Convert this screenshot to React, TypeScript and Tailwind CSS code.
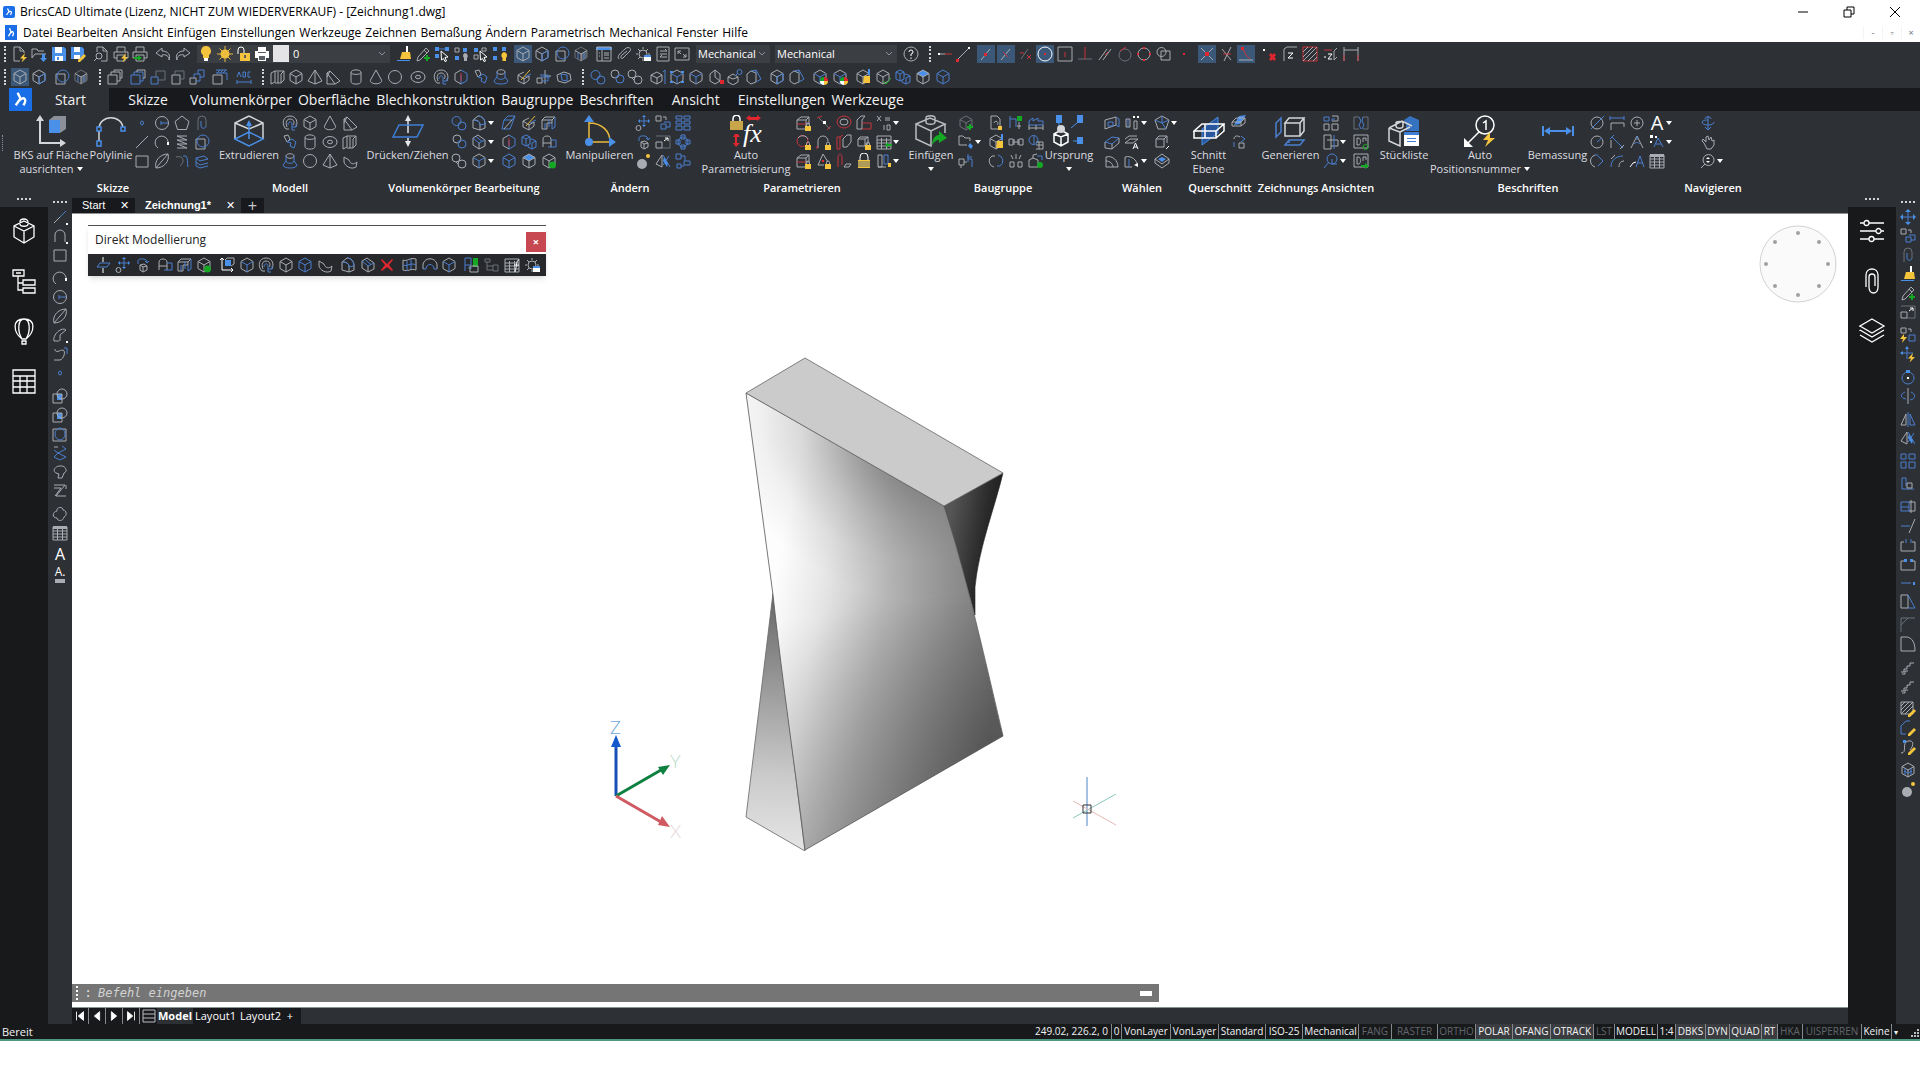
import { ReactNode } from 'react';

// [ink, path] pairs on a 16x16 grid. Lower case inks stroke, upper case inks fill.
type Mark = [string, string];

const INKS: Record<string, string> = {
  g: 'fill-none stroke-[#a9adb3]',
  d: 'fill-none stroke-[#6b7078]',
  b: 'fill-none stroke-[#4a7fd0]',
  r: 'fill-none stroke-[#c8323c]',
  y: 'fill-none stroke-[#e8b93c]',
  w: 'fill-none stroke-white',
  n: 'fill-none stroke-[#1fae2c]',
  G: 'fill-[#a9adb3] stroke-none',
  D: 'fill-[#5c6066] stroke-none',
  B: 'fill-[#4a90e8] stroke-none',
  R: 'fill-[#e0262e] stroke-none',
  Y: 'fill-[#f4c43c] stroke-none',
  W: 'fill-white stroke-none',
  N: 'fill-[#15a824] stroke-none',
};

const HEX = 'M8 1 14 4.5V11.5L8 15 2 11.5V4.5Z';
const HEX_IN = 'M2 4.5 8 8 14 4.5M8 8V15';
const BOLT: Mark = ['Y', 'M13 7 8 12.5H11L9.5 16.5 15 11H12Z'];
const PLUS: Mark = ['N', 'M11 9H13V11H15V13H13V15H11V13H9V11H11Z'];
const PENCIL: Mark = ['Y', 'M14 8 16 10 10 16H8V14Z'];
const LOCK: Mark[] = [
  ['Y', 'M9 11H15V16H9Z'],
  ['g', 'M10.5 11V9.5a1.500 1.500 0 0 1 3 0V11'],
];
const PRINT: Mark = ['g', 'M4 6V1H12V6M4 12H1V6H15V12H12M4 9H12V15H4Z'];
const GRID: Mark = ['g', 'M1 2H15V15H1ZM1 6H15M1 9H15M1 12H15M5.5 4V15M10.5 4V15'];
const CURSOR: Mark = ['w', 'M7 5 14 11 11 11.5 12.5 15 11 15.5 9.5 12.5 7.5 14Z'];

const ICONS: Record<string, Mark[]> = {
  new: [['g', 'M8 15H2V1H8L12 5V7M8 1V5H12'], BOLT],
  open: [['g', 'M1 12V3H6L7 5H13M1 12 4 8H15'], ['B', 'M11 8H14V12H16L12.5 16 9 12H11Z']],
  save: [['B', 'M1 1H13L15 3V15H1Z'], ['W', 'M4 1H11V7H4ZM4 10H12V15H4Z'], ['B', 'M6 11H8V14H6Z']],
  saveAs: [['B', 'M1 1H12L14 3V13H1Z'], ['W', 'M4 1H10V6H4ZM4 9H10V13H4Z'], PENCIL],
  preview: [['g', 'M4 6V1H10L14 5V15H8M10 1V5H14M9 10a3 3 0 1 1-6 0a3 3 0 1 1 6 0M4 12 1 15']],
  printFast: [PRINT, BOLT],
  printSend: [PRINT, ['N', 'M2 11H6V9L10 12 6 15V13H2Z']],
  undo: [['g', 'M7 2 1 7 7 11V9C11 8 14 10 14 14C16 9 13 5 7 5Z']],
  redo: [['g', 'M9 2 15 7 9 11V9C5 8 2 10 2 14C0 9 3 5 9 5Z']],
  bulb: [['Y', 'M8 0A5 5 0 0 0 5 9V12H11V9A5 5 0 0 0 8 0Z'], ['W', 'M6 12H10V15H6Z']],
  sun: [['Y', 'M12.5 8a4.5 4.5 0 1 1-9 0a4.5 4.5 0 1 1 9 0'], ['y', 'M8 0V16M0 8H16M2.5 2.5 13.5 13.5M13.5 2.5 2.5 13.5']],
  unlock: [['w', 'M3 8V4A3 3 0 0 1 9 4V7'], ['Y', 'M5 7H15V15H5Z'], ['D', 'M9 9H11V12H9Z']],
  printer: [['W', 'M4 1H12V5H15V12H12V15H4V12H1V5H4Z'], ['D', 'M4 6H12V7H4ZM5 10H11V14H5Z']],
  brush: [['W', 'M10 0H12V7H10Z'], ['Y', 'M6 6H14L15 13H4Z'], ['B', 'M1 14H14V15H1Z']],
  dropper: [['g', 'M11 2 14 5 5 14 2 15 3 11ZM9 4 12 7'], PLUS],
  pickBox: [['B', 'M1 1H5V5H1ZM11 1H15V5H11ZM1 8H5V12H1Z'], ['b', 'M5 3H11'], CURSOR],
  pickLayer: [['B', 'M9 2H13V6H9ZM1 10H5V14H1Z'], ['g', 'M1 2H5V6H1Z'], ['G', 'M11 7a3 3 0 0 1 2 5V15H10V12a3 3 0 0 1 1-5']],
  pickOff: [['B', 'M1 2H5V6H1Z'], ['g', 'M9 2H13V5H9ZM1 9H5V13H1Z'], CURSOR],
  pickOn: [['B', 'M1 1H5V5H1ZM10 1H14V5H10ZM1 10H5V14H1Z'], ['Y', 'M12 6a3.500 3.500 0 0 1 2 6V15H10.500V12a3.500 3.500 0 0 1 1.500-6']],
  cube: [['g', HEX], ['g', HEX_IN]],
  cubeBlue: [['b', HEX], ['b', HEX_IN]],
  cubeMix: [['g', HEX], ['b', HEX_IN]],
  cubeSide: [['g', HEX], ['g', HEX_IN], ['b', 'M8 15V8L14 4.5V11.5Z']],
  cubeFace: [['B', 'M8 1 14 4.500 8 8 2 4.500Z'], ['g', HEX], ['g', HEX_IN]],
  cubeShade: [['D', 'M8 8 14 4.5V11.5L8 15Z'], ['d', HEX], ['g', HEX_IN], ['b', 'M5 6.500V13M11 6.500V13']],
  cubeUp: [['b', 'M8 1 14 4.500V11.500L8 15M8 6V15'], ['g', 'M8 15 2 11.500V4.500L8 1'], ['r', 'M8 4V12']],
  cubeOk: [['g', HEX], ['g', HEX_IN], ['N', 'M15 12a3.500 3.500 0 1 1-7 0a3.500 3.500 0 1 1 7 0']],
  cubeCheck: [['g', HEX], ['g', HEX_IN], ['n', 'M8 12 11 15 16 9']],
  cubePlus: [['d', HEX], ['d', HEX_IN], PLUS],
  cubeArrow: [['g', 'M7 3 12 6V12L7 15 1 12V6ZM1 6 7 9 12 6M7 9V15'], ['b', 'M15 15V1M13 3 15 1']],
  cubeNodes: [['g', HEX], ['b', HEX_IN], ['B', 'M1 2H4V4H1ZM12 2H15V4H12ZM1 12H4V14H1ZM12 12H15V14H12Z']],
  cubeX: [['g', 'M7 1 12 5V12L7 15 2 12V5ZM7 1V8L12 12'], ['R', 'M12 11H16V15H12Z']],
  cubeBall: [['g', 'M6 5 11 8V13L6 16 1 13V8ZM1 8 6 10 11 8'], ['b', 'M15 3a2.500 2.500 0 1 1-5 0a2.500 2.500 0 1 1 5 0M10 5 8 7']],
  cubeTilt: [['g', 'M5 2 10 4V13L5 15 1 12V5Z'], ['b', 'M5 2 10 1 15 10 10 13M10 1V4']],
  cubeColor: [['g', HEX], ['b', HEX_IN], ['R', 'M12 8A4 4 0 0 1 16 12H12Z'], ['Y', 'M12 16A4 4 0 0 0 16 12H12Z'], ['W', 'M12 16A4 4 0 0 1 8 12H12Z'], ['N', 'M8 12A4 4 0 0 1 12 8V12Z']],
  cubeGold: [['g', HEX], ['g', HEX_IN], ['Y', 'M9 7H15V14H8Z'], ['B', 'M13 0H15V6H13Z']],
  circleBox: [['g', 'M2 5H11V15H2Z'], ['b', 'M15 7a6 6 0 1 1-12 0a6 6 0 1 1 12 0']],
  circleBoxGray: [['g', 'M5 5H14V14H5ZM10 6a4.500 4.500 0 1 1-9 0a4.500 4.500 0 1 1 9 0']],
  circleBoxFill: [['B', 'M5 6H10V12H5Z'], ['g', 'M1 6H10V15H1Z'], ['g', 'M15 6a5 5 0 1 1-10 0a5 5 0 1 1 10 0']],
  panel: [['B', 'M0 1H16V4H0Z'], ['g', 'M1 1H15V15H1ZM6 4V15M8 7H13M8 9H13M8 12H13M3 7H4M3 10H4']],
  attach: [['g', 'M3 13C0 10 6 6 9 3C12 0 16 2 14 5L7 12C5 14 4 10 6 9L11 5']],
  gear: [['g', 'M12 8a4 4 0 1 1-8 0a4 4 0 1 1 8 0M8 1V3M8 13V15M1 8H3M13 8H15M3 3 5 5M13 3 11 5M3 13 5 11'], ['W', 'M9 9H16V15H9Z'], ['B', 'M9 9H16V11H9Z']],
  list: [['g', 'M2 1H14V15H2ZM5 5H12M5 8H12M5 11H12M10 3 12 5M7 9 5 11']],
  resize: [['g', 'M1 2H15V14H1ZM4 8V5H7M4 5 7 8M12 8V11H9M12 11 9 8']],
  help: [['g', 'M15 8a7 7 0 1 1-14 0a7 7 0 1 1 14 0'], ['w', 'M6 6a2 2 0 1 1 2 2V10M8 11.500V13']],
  copyBack: [['g', 'M1 6H10V15H1Z'], ['g', 'M4 6V3H13V12H10M7 3V1H15V9H13']],
  copyBlue: [['b', 'M1 6H10V15H1ZM4 6V3H13V12H10'], ['g', 'M7 3V1H15V9H13']],
  copyFar: [['b', 'M1 8H8V15H1Z'], ['d', 'M6 8V2H15V11H8']],
  copyNear: [['g', 'M3 6H11V15H3Z'], ['d', 'M6 6V2H15V10H11']],
  copyTwo: [['g', 'M1 9H7V15H1Z'], ['b', 'M5 9V5H11V12H7M9 5V1H15V8H11']],
  hatchBox: [['g', 'M1 6H10V15H1Z'], ['b', 'M4 4H15V11M4 1H15M5 4 8 1M8 4 11 1M11 4 14 1']],
  spell: [['b', 'M1 13H15M1 11V15M15 11V15M1 8 3 3 5 8M7 3V8H9.500V3ZM14.500 3H12V8H14.500']],
  block: [['g', 'M1 4 5 2V13L1 15ZM5 2H14L11 5V14H5M8 3V14M14 2V11L11 14']],
  pyramid: [['g', 'M8 1 15 12 8 15 1 12ZM8 1V15']],
  wedge: [['g', 'M2 4 5 2 15 12 10 15H2ZM5 2 2 8M10 15 2 4']],
  cylinder: [['g', 'M3 3.500C3 0 13 0 13 3.500V12.500C13 16 3 16 3 12.500ZM3 3.500C3 6 13 6 13 3.500']],
  cone: [['g', 'M8 1 13.500 11C15 16 1 16 2.500 11Z']],
  sphere: [['g', 'M14.500 8a6.500 6.500 0 1 1-13 0a6.500 6.500 0 1 1 13 0']],
  torus: [['g', 'M15 8a7 5.500 0 1 1-14 0a7 5.500 0 1 1 14 0M10.500 8a2.500 1.800 0 1 1-5 0a2.500 1.800 0 1 1 5 0']],
  spiral: [['g', 'M4 14C-1 9 1 1 8 1C15 1 16 8 14 12M5 12C3 7 5 4 8 4C12 4 13 8 11 10M4 14H7'], ['b', 'M6 10C6 6 10 6 10 9V12H14V9M10 12V15H13']],
  pipe: [['g', 'M2 2 6 1 8 5 5 8Z'], ['b', 'M5 8 10 5 14 8 12 14 8 12 9 9Z']],
  loft: [['g', 'M4 3C4 0 12 0 12 3C12 6 4 6 4 3'], ['b', 'M4 3V8L1 12C1 16 15 16 15 12L12 8V3M4 8C4 11 12 11 12 8']],
  slice: [['g', 'M2 6 8 3M2 6 8 10V15L2 12ZM8 10 13 7V11L8 15'], ['y', 'M14 1 5 11'], ['b', 'M9 8 15 5']],
  level: [['g', 'M1 9H6V14H1ZM9 1V15M9 7H15'], ['b', 'M4 6H12V12H6M5 8H14']],
  merge: [['g', 'M8 3 14 5 15 11 9 14 2 12 1 6Z'], ['b', 'M5 5 11 6V12L6 11Z']],
  ringsBlue: [['b', 'M10 6a4.500 4.500 0 1 1-9 0a4.500 4.500 0 1 1 9 0M15 11a4 4 0 1 1-8 0a4 4 0 1 1 8 0']],
  rings: [['g', 'M10 5a4 4 0 1 1-8 0a4 4 0 1 1 8 0'], ['b', 'M15 10a4 4 0 1 1-8 0a4 4 0 1 1 8 0']],
  ringsGray: [['g', 'M9 5a4 4 0 1 1-8 0a4 4 0 1 1 8 0M15 11a4 4 0 1 1-8 0a4 4 0 1 1 8 0M5 9 7 11']],
  cubesTwo: [['b', 'M5 1 9 3V10L5 12 1 10V3ZM1 3 5 5 9 3M5 5V12M11 5 15 7V13L11 15 7 13V11M9 6 11 5M11 9V15M11 9 15 7']],
  dots3: [['g', 'M3 8H8'], ['r', 'M8 8H15'], ['W', 'M1 7H3V9H1Z']],
  snapEnd: [['g', 'M2 14 13 3'], ['R', 'M1 13H4V16H1Z'], ['W', 'M13 1H15V3H13Z']],
  snapLine: [['g', 'M3 14 12 3'], ['R', 'M6 7H9V10H6Z']],
  snapMid: [['g', 'M3 14 12 3'], ['r', 'M5 6 10 11']],
  snapNear: [['d', 'M3 13 10 3'], ['r', 'M9 9 13 13M13 9 9 13M2 7H6']],
  snapCenter: [['w', 'M15 8a7 7 0 1 1-14 0a7 7 0 1 1 14 0'], ['R', 'M7 7H9V9H7Z']],
  snapBox: [['g', 'M1 1H15V15H1Z'], ['r', 'M8 6V11']],
  snapPerp: [['d', 'M1 13H15'], ['r', 'M8 1V13']],
  snapPar: [['g', 'M2 14 10 3M6 14 14 3'], ['r', 'M8 9 11 6']],
  snapTan: [['d', 'M14 9a6 6 0 1 1-12 0a6 6 0 1 1 12 0'], ['r', 'M3 5 9 1']],
  snapQuad: [['g', 'M14 8a6 6 0 1 1-12 0a6 6 0 1 1 12 0'], ['R', 'M7 1H9V3H7ZM7 13H9V15H7ZM1 7H3V9H1ZM13 7H15V9H13Z']],
  snapDot: [['R', 'M7 7H9V9H7Z']],
  snapCross: [['g', 'M2 2 14 14M14 2 2 14'], ['R', 'M6 6H10V10H6Z']],
  snapApp: [['g', 'M3 3 12 14M12 1 5 15'], ['r', 'M4 8H12']],
  snapExt: [['g', 'M1 14H15'], ['r', 'M5 3 8 9 12 13'], ['R', 'M3 1H6V4H3Z']],
  snapNone: [['R', 'M8 9 10 7 15 13 13 15ZM13 7 15 9 10 15 8 13Z'], ['W', 'M2 3H4V5H2Z']],
  zTop: [['g', 'M2 15V3L5 1H15'], ['w', 'M6 7H11L6 12H11']],
  hatchRed: [['r', 'M1 1H15V15H1Z'], ['g', 'M1 6 6 1M1 11 11 1M1 15 15 1M6 15 15 6M11 15 15 11']],
  zNeg: [['r', 'M1 4H9'], ['w', 'M1 11H3M5 8H9L5 13H9'], ['g', 'M14 2 11 5V14L14 11']],
  dimTop: [['g', 'M1 1V15M15 1V15M1 4H15'], ['r', 'M1 9V15M15 9V15']],
  point: [['b', 'M9.500 8a1.500 2 0 1 1-3 0a1.500 2 0 1 1 3 0']],
  line: [['g', 'M2 14 14 2']],
  lineBlue: [['g', 'M2 14 8 8'], ['b', 'M8 8 14 2'], ['W', 'M14 14H16V16H14Z']],
  circle: [['g', 'M14.500 8a6.500 6.500 0 1 1-13 0a6.500 6.500 0 1 1 13 0'], ['b', 'M7 8H14M7 6V10']],
  pentagon: [['g', 'M8 1 15 6.500 12.500 14.500H3.500L1 6.500Z']],
  hook: [['d', 'M4 15V5A4 4 0 0 1 12 5V11'], ['b', 'M12 11C12 14 7 14 7 11V6']],
  arcLoop: [['g', 'M4 14A6.500 6.500 0 1 1 14 10'], ['W', 'M13 8H15V11H13Z']],
  spring: [['g', 'M3 2H13M3 6H13M3 10H13M3 14H13M3 2 13 6M3 6 13 10M3 10 13 14']],
  rect: [['g', 'M2 3H14V14H2Z']],
  leaf: [['g', 'M14 1C16 8 10 15 2 15C0 8 6 1 14 1ZM2 15 14 1']],
  ellipseArc: [['g', 'M14 3C10 -1 0 8 2 14H7M8 8 14 3M8 8V14'], ['W', 'M14 14H16V16H14Z']],
  spline: [['d', 'M2 4C10 2 11 9 6 13'], ['b', 'M9 3H12C14 5 13 9 14 14']],
  squiggle: [['g', 'M3 3C3 8 8 4 11 4C14 5 12 13 8 14H2'], ['b', 'M12 2H15V8']],
  sheets: [['b', 'M2 5 10 3 14 6 6 8ZM2 9 6 12 14 10M2 13 6 15 14 13M2 5V13']],
  wipe: [['b', 'M2 5 6 8 14 4M2 12 6 8 14 12 8 15ZM10 1 14 4'], ['g', 'M2 2H6']],
  arch: [['g', 'M3 14V7A5 5 0 0 1 13 7V14'], ['W', 'M14 14H16V16H14Z']],
  zigzag: [['g', 'M2 2H13L4 13H14M2 5H9L3 13M14 2V6']],
  cloud: [['g', 'M5 5C4 1 11 0 11 4C15 4 15 10 12 11C11 16 5 15 5 12C0 12 0 6 5 5']],
  hand: [['g', 'M4 9C0 7 3 2 8 2C14 1 16 8 12 9L10 14H6L7 10Z']],
  bulge: [['g', 'M1 3H14V15H1Z'], ['b', 'M13 8a5 6 0 1 1-10 0a5 6 0 1 1 10 0']],
  table: [['G', 'M1 1H15V4H1Z'], GRID],
  curl: [['g', 'M2 3 8 1 15 6 13 13 7 15M2 3C1 9 3 12 7 15M8 1 5 6']],
  edgeRound: [['g', 'M2 13V5L7 1C11 1 14 4 14 9V13L9 15V10C9 6 6 5 2 5M2 13 9 15'], ['b', 'M7 1C11 1 14 4 14 9L9 10C9 6 6 5 2 5']],
  edgeCut: [['g', 'M2 4 7 1 14 6V12L8 15 2 11ZM8 9V15'], ['b', 'M2 4 8 9 14 6M5 2.500 11 7.500']],
  shell: [['g', 'M2 4 7 7C8 11 12 12 15 9L14 14C9 17 3 13 2 9Z']],
  prismBlue: [['g', 'M1 5 4 2H14L11 5ZM1 5V14H6V8H11V5'], ['b', 'M4 8V14M8 4V12M14 2V12L11 14V8']],
  tiltBox: [['b', 'M3 5 7 1H14L11 5ZM14 1 9 14M3 5 1 14H9'], ['g', 'M11 5 3 14']],
  archBox: [['g', 'M2 13V5C2 1 10 1 10 5V13M2 9H10'], ['b', 'M10 6H15V13H7']],
  move4: [['b', 'M9 1V11M4 6H14'], ['B', 'M9 0 11 2H7ZM9 12 11 10H7ZM3 6 5 4V8ZM15 6 13 4V8Z'], ['g', 'M6 13a2.500 2.500 0 1 1-5 0a2.500 2.500 0 1 1 5 0']],
  move: [['b', 'M8 2V14M2 8H14'], ['B', 'M8 0 11 3H5ZM8 16 11 13H5ZM0 8 3 5V11ZM16 8 13 5V11Z']],
  moveBolt: [['b', 'M7 1V13M1 7H13'], ['B', 'M7 0 9 3H5ZM0 7 3 5V9Z'], BOLT],
  push: [['w', 'M8 0V5M8 11V16'], ['b', 'M2 10 5 6H15L12 10Z']],
  copyTo: [['g', 'M1 1H6V6H1ZM8 2H11V5'], ['b', 'M6 9H11V14H6ZM9 7H15V12H11']],
  copyBolt: [['g', 'M1 1H6V6H1ZM8 2H11V5'], ['b', 'M9 8H15V14H9Z'], ['Y', 'M4 7 0 12H3L2 16 7 10H4Z']],
  array: [['b', 'M1 1H6V6H1ZM9 1H15V6H9ZM1 9H6V15H1ZM9 9H15V15H9Z']],
  arrayFull: [['b', 'M1 1H7V4H1ZM9 1H15V4H9ZM1 6H7V9H1ZM9 6H15V9H9ZM1 11H7V15H1ZM9 11H15V15H9Z']],
  arrayRing: [['b', 'M13 8a5 5 0 1 1-10 0a5 5 0 1 1 10 0M6 1H10V5H6ZM6 11H10V15H6ZM1 6H5V10H1ZM11 6H15V10H11Z']],
  arrayPath: [['b', 'M1 1H6V6H1ZM9 8H15V12H9ZM2 11H6V15H2ZM6 3H10V8M6 13H9']],
  rotate3: [['b', 'M4 4C4 1 13 1 13 5M11 4 13 6 15 4M4 4V7'], ['g', 'M6 8 10 7 13 9V13L9 15 6 13ZM6 8 9 10 13 9M9 10V15']],
  scale: [['g', 'M1 8H7V14H1Z'], ['d', 'M1 2H15V14H7'], ['w', 'M9 7 13 4M10 4H13V7']],
  ball: [['G', 'M12 11a5 5 0 1 1-10 0a5 5 0 1 1 10 0'], ['Y', 'M15 3a2 2 0 1 1-4 0a2 2 0 1 1 4 0']],
  mirror: [['g', 'M6 3V14H1Z'], ['b', 'M8 1V16M10 3V14H15Z']],
  mirrorFlip: [['g', 'M7 2V14L1 11Z'], ['B', 'M9 4 13 10 12 14 8 8Z'], ['b', 'M8 2 15 14M14 3 8 12']],
  spin: [['b', 'M14 9a6 6 0 1 1-12 0a6 6 0 1 1 12 0'], ['B', 'M6 1H10V4H6Z'], ['W', 'M7 8H9V10H7Z']],
  spinAxis: [['g', 'M8 0V16'], ['b', 'M5 4C0 6 0 10 6 11M11 4C16 6 16 11 10 12']],
  align: [['b', 'M2 2H6V10M2 2V13H14'], ['g', 'M7 7H12V12H7Z']],
  stretch: [['b', 'M1 3H9V12H1ZM1 8H9'], ['g', 'M9 3H15V12H9M11 1V14']],
  trim: [['b', 'M1 8H10'], ['g', 'M15 1 9 15']],
  breakAt: [['b', 'M6 2V6M11 2V6'], ['g', 'M4 5H1V14H15V5H12']],
  join: [['B', 'M4 3H7V6H4ZM10 3H13V6H10Z'], ['g', 'M4 5H1V14H15V5H12']],
  extend: [['b', 'M1 8H11'], ['B', 'M13 7H15V10H13Z']],
  taper: [['g', 'M1 1H8V14H1Z'], ['b', 'M8 1 15 14H8']],
  chamfer: [['d', 'M1 15V1H15M1 8 8 1']],
  fillet: [['g', 'M1 15V1H7C12 2 15 6 15 15Z']],
  steps: [['g', 'M1 13H4V10H7V7H10V4H14M2 15H5V12H8']],
  hatchEdit: [['g', 'M1 1H13V13H1ZM1 5 5 1M1 9 9 1M1 13 13 1M5 13 13 5'], PENCIL],
  plineEdit: [['b', 'M1 14H6M1 14V6L6 1H10'], PENCIL],
  splineEdit: [['g', 'M1 14C8 14 1 4 8 2C14 1 14 6 10 11'], ['B', 'M3 1H6V4H3Z'], PENCIL],
  cubeWire: [['g', HEX], ['g', HEX_IN], ['b', 'M4 9 8 11 12 9M5 6 5 13M11 6V13']],
  pBox: [['g', 'M1 5 5 2H13V9H10M1 5H10V14H1ZM10 5 13 2'], ['r', 'M1 9H10'], ...LOCK],
  pCirc: [['r', 'M12 7a5.500 5.500 0 1 1-11 0a5.500 5.500 0 1 1 11 0'], ['g', 'M2 4A6 6 0 0 1 12 5'], ...LOCK],
  pNode: [['d', 'M2 2 14 14'], ['r', 'M1 3 6 1M11 15 15 11'], ['W', 'M7 6H10V9H7Z']],
  pArc: [['g', 'M2 14V7A5 5 0 0 1 12 7'], ['r', 'M1 12V15'], ...LOCK],
  pCone: [['g', 'M7 1 12 9M7 1 2 12H8'], ['R', 'M6 7H8V9H6Z'], ...LOCK],
  pTorus: [['r', 'M15 7a7 6 0 1 1-14 0a7 6 0 1 1 14 0'], ['g', 'M12 7a4 3 0 1 1-8 0a4 3 0 1 1 8 0']],
  pBlock: [['g', 'M7 5 11 1H15V8L11 13H7Z'], ['r', 'M1 15V3H4V15ZM4 3 7 1']],
  pPipe: [['g', 'M8 14 10 11H15L13 14Z'], ['r', 'M2 14V4C2 0 6 0 6 4V12']],
  pEl: [['g', 'M1 14V5L5 1H9L6 5V14Z'], ['r', 'M6 8H15V14H6']],
  pPlate: [['g', 'M2 5 4 3H12V10H9M2 5H9V12H2ZM9 5 12 3'], ...LOCK],
  lockBig: [['w', 'M4 7V4a4 4 0 0 1 8 0V7'], ['Y', 'M2 7H14V15H2Z'], ['d', 'M2 9H14M2 11H14M2 13H14']],
  formula: [['g', 'M1 1 5 6M5 1 1 6M9 3H14M9 5H14M8 10V15M11 10H14V15H11Z']],
  tableIn: [GRID, ['N', 'M9 11 12 8V10H16V12H12V14Z']],
  pillars: [['g', 'M2 14V2H6V14ZM2 14H10'], ['b', 'M8 2H12V11H8Z'], ['Y', 'M12 10H15V14H12Z']],
  folderPin: [['g', 'M1 11V2H5L7 4H12V7M1 11H9'], ['B', 'M10 12 12 9 15 12 13 15Z']],
  gizmo: [['b', 'M10 1V9M14 4H9M10 6H14V14'], ['g', 'M1 6H6V12H1ZM3 12V15M6 9H9']],
  doc: [['g', 'M3 1H9L12 4V14H3ZM6 8a2 2 0 1 1 3 2'], ['Y', 'M10 11H14V15H10Z']],
  flagGreen: [['b', 'M2 1V13M2 4H8V12'], ['N', 'M9 1H14V6H9Z'], ['g', 'M11 7V14M9 11H13']],
  factory: [['b', 'M1 6 5 3V6L10 3V6H15V10H1Z'], ['g', 'M1 13H15M1 10V15M8 10V15M15 10V15']],
  linkH: [['g', 'M1 5H5V11H1ZM11 5H15V11H11ZM5 8H11M6 5V11M10 5V11']],
  ballBox: [['b', 'M10 6a4.500 4.500 0 1 1-9 0a4.500 4.500 0 1 1 9 0M6 1V11'], ['g', 'M8 8H15V15H8M8 11H15M11 8V15']],
  cycle: [['b', 'M10 2A6 6 0 0 1 12 13M12 13H9'], ['g', 'M6 14A6 6 0 0 1 4 3M4 3H7']],
  burst: [['g', 'M2 9H6V14H2ZM10 9H14V14H10ZM8 1V6M3 2 5 6M13 2 11 6']],
  asmOk: [['g', 'M1 7 5 5 10 7V14H1ZM5 5V2L9 1'], ['b', 'M9 3H14V7'], ['N', 'M15 12a3 3 0 1 1-6 0a3 3 0 1 1 6 0']],
  selPlate: [['g', 'M1 5 12 2V10L1 14Z'], ['b', 'M4 7H9V11H4ZM12 2 15 4V12L12 10']],
  selPlate2: [['b', 'M1 8 8 3 15 4 8 10Z'], ['g', 'M1 8V14L8 15V10M8 15 15 9V4']],
  selPills: [['g', 'M2 4H6V12H2ZM10 6H13V14H10Z'], ['W', 'M9 1H11V3H9ZM13 1H15V3H13Z'], ['b', 'M4 4V12']],
  selText: [['g', 'M1 9 6 5H14L9 9ZM1 5 5 2H13'], ['w', 'M9 15 11.500 9 14 15M10 13H13']],
  selFan: [['g', 'M2 14V4C9 2 14 8 14 14ZM2 8C6 8 9 11 9 14']],
  selFan2: [['g', 'M1 14V4C8 2 13 8 13 11M1 14H8'], ['b', 'M5 6V14'], ['W', 'M10 12 14 10V14Z']],
  selGem: [['g', 'M8 1 15 5 12 14 4 14 1 5Z'], ['b', 'M8 1V8L12 14M8 8 1 5M8 8 15 5']],
  selDiamond: [['g', 'M8 1 15 6 8 11 1 6ZM1 6V10L8 15 15 10V6'], ['B', 'M8 4 12 6 8 9 4 6Z']],
  selCube: [['g', 'M2 5H10V13H2ZM2 5 5 2H13V9M10 5 13 2'], ['w', 'M15 12 12 15']],
  planeCut: [['B', 'M8 1 15 0 9 9 3 10Z'], ['g', 'M1 7 5 3H14L10 7ZM1 7V11H10V7M14 3V8L10 11']],
  planeSwap: [['g', 'M3 5C3 2 6 1 9 3M8 9H13V14H8Z'], ['b', 'M10 2 14 5 10 8M3 8V13']],
  viewGrid: [['g', 'M9 1H15V6H9M9 9H15V15H9ZM1 9H6V15H1Z'], ['b', 'M1 2H6V6H1ZM9 6V4H12']],
  viewPart: [['g', 'M1 1H8V15H1ZM8 6H15V12H8M4 6H8'], ['b', 'M11 1V15']],
  viewZoom: [['b', 'M14 6a5 5 0 1 1-10 0a5 5 0 1 1 10 0M6 9 1 15M9 6V11H14']],
  viewBreak: [['d', 'M6 2H1V14H6M10 2H15V14H10'], ['b', 'M6 2 8 6 6 10 8 14M10 2 9 6 11 10 9 14']],
  viewDocSync: [['g', 'M1 1H15V14H1ZM4 11V4H6C8 5 8 10 6 11ZM10 8V4H13V7'], ['n', 'M15 13a2.500 2.500 0 1 1-5 0a2.500 2.500 0 1 1 5 0']],
  viewDocOut: [['g', 'M1 1H15V14H1ZM4 11V4H6C8 5 8 10 6 11ZM10 8V4H13V7'], ['N', 'M8 12H12V10L16 13 12 16V14H8Z']],
  dimDia: [['g', 'M14 8a6 6 0 1 1-12 0a6 6 0 1 1 12 0'], ['b', 'M2 14 15 1']],
  dimRad: [['g', 'M14 8a6 6 0 1 1-12 0a6 6 0 1 1 12 0'], ['b', 'M8 8 13 4']],
  dimArc: [['g', 'M6 2C0 4 0 12 6 14'], ['b', 'M9 3 14 8 9 13M6 2H9']],
  dimLin: [['b', 'M1 3H15M1 1V5M15 1V5'], ['g', 'M2 15V8H15V12']],
  dimDiag: [['b', 'M3 3 14 14M5 1 1 5'], ['g', 'M2 6V14M11 15 15 11']],
  dimCurve: [['b', 'M2 14C2 8 6 3 14 3'], ['g', 'M10 14C10 10 12 8 15 8M2 6 6 2']],
  dimCen: [['g', 'M14 8a6 6 0 1 1-12 0a6 6 0 1 1 12 0M8 5V11M5 8H11']],
  dimAng: [['g', 'M8 2 2 14M8 2 14 14'], ['b', 'M5 10C7 8 9 8 11 10M8 6V2']],
  textArrow: [['b', 'M7 14 11 3 15 14M8 10H14'], ['w', 'M1 14 4 10 7 9']],
  textStyle: [['b', 'M5 13 9 4 14 13M7 10H12'], ['W', 'M1 1H4V4H1ZM1 7H3V9H1ZM6 2H8V4H6Z']],
  orbit: [['b', 'M8 1V15M5 4C5 1 11 1 11 4M14 7C14 11 2 11 2 7M5 12 8 15 11 12M2 7C3 5 6 5 8 5']],
  pan: [['g', 'M4 9 2 7 3 5 6 8V3L8 2 9 6 11 3 12 7 14 6V11L11 15H7Z']],
  zoom: [['g', 'M14 7a5.500 5.500 0 1 1-11 0a5.500 5.500 0 1 1 11 0M5 11 1 15'], ['W', 'M8 4 10 6H6ZM8 10 10 8H6Z']],
  ucs: [['w', 'M3 1V13H14M1 3 3 1 5 3M12 11 14 13 12 15'], ['B', 'M6 3H12V9H6Z'], ['g', 'M6 3 8 1H15V7L12 9']],
  cross: [['R', 'M3 2 8 7 13 2 14 3 10 8 14 13 13 14 8 10 3 14 2 13 6 8 2 3Z']],
  wave: [['g', 'M1 3C5 5 8 0 14 2V13C9 11 6 15 1 13Z'], ['b', 'M5 4V14M9 2V12M1 8C5 10 9 5 14 8']],
  domeBlue: [['g', 'M1 12V7C3 0 13 0 15 7V12'], ['b', 'M4 12C4 6 12 6 12 12M1 12H4M12 12H15']],
  syncGreen: [['b', 'M1 1H7V8H1ZM1 8V14M4 11H8'], ['N', 'M9 1H14V10H9Z'], ['g', 'M6 9H14V15H6Z']],
  tree: [['d', 'M1 2H6V5H1ZM3 5V13H9M3 9H9M9 8H14V14H9Z']],
  tableFx: [GRID, ['w', 'M15 3C12 3 13 8 11 15M10 8H15']],
};

const icon = (name: string, cls = 'size-4') => (
  <svg viewBox="0 0 16 16" className={`${cls} shrink-0`} aria-hidden="true">
    {(ICONS[name] ?? []).map(([ink, d], i) => (
      <path key={i} d={d} className={INKS[ink]} />
    ))}
  </svg>
);

interface ToolProps {
  name: string;
  active?: boolean;
}

function Tool({ name, active }: ToolProps) {
  return (
    <button
      type="button"
      aria-label={name}
      className={`flex h-[18px] w-[18px] shrink-0 items-center justify-center ${active ? 'bg-[#3b5878]' : ''}`}
    >
      {icon(name)}
    </button>
  );
}

// A leading * marks a pressed tool
function ToolGroup({ width, tools }: { width: string; tools: string }) {
  return (
    <div className={`flex shrink-0 justify-between ${width}`}>
      {tools.split(' ').map((t, i) => (
        <Tool key={i} name={t.replace('*', '')} active={t.startsWith('*')} />
      ))}
    </div>
  );
}

const Grip = () => <span className="h-4 w-[6px] shrink-0 border-r-2 border-dotted border-[#d0d3d6]" />;

const Logo = ({ cls }: { cls: string }) => (
  <svg viewBox="0 0 24 24" preserveAspectRatio="none" className={cls} aria-hidden="true">
    <path d="M0 0H24V24H0Z" className="fill-[#1a6fe8]" />
    <path d="M9 5 12 11 7 18M11 13C16 8 19 12 15 18" className="fill-none stroke-white stroke-[2.5]" />
  </svg>
);

const MENUS = [
  'Datei', 'Bearbeiten', 'Ansicht', 'Einfügen', 'Einstellungen', 'Werkzeuge', 'Zeichnen',
  'Bemaßung', 'Ändern', 'Parametrisch', 'Mechanical', 'Fenster', 'Hilfe',
];

function TitleBar() {
  return (
    <header className="bg-white text-black">
      <div className="flex h-[23px] items-center pl-[3px]">
        <Logo cls="size-3 rounded-xs" />
        <h1 className="ml-[5px] text-[12px]">BricsCAD Ultimate (Lizenz, NICHT ZUM WIEDERVERKAUF) - [Zeichnung1.dwg]</h1>
        <div className="ml-auto flex pr-[2px]">
          {['M3 8H13', 'M3 6H10V13H3ZM6 6V3H13V10H10', 'M3 3 13 13M13 3 3 13'].map((d, i) => (
            <button key={d} type="button" aria-label={['Minimieren', 'Wiederherstellen', 'Schließen'][i]} className="flex w-[46px] justify-center">
              <svg viewBox="0 0 16 16" className="size-4">
                <path d={d} className="fill-none stroke-black" />
              </svg>
            </button>
          ))}
        </div>
      </div>
      <nav className="flex h-[19px] items-center pl-[5px] text-[12px]">
        <Logo cls="mr-1 h-[15px] w-3" />
        {MENUS.map((m) => (
          <button key={m} type="button" className="px-[2px] leading-4">{m}</button>
        ))}
        <div className="ml-auto flex text-[9px] text-gray-500">
          {['-', '▫', '×'].map((m) => (
            <button key={m} type="button" className="w-[19px] border-l border-gray-100">{m}</button>
          ))}
        </div>
      </nav>
    </header>
  );
}

function Dropdown({ label, value, width }: { label: string; value: string; width: string }) {
  return (
    <div className={`relative flex h-[18px] shrink-0 items-center bg-[#3b3e43] ${width}`}>
      <select aria-label={label} className="w-full appearance-none bg-transparent pl-[2px] text-[11px] leading-4 text-white">
        <option>{value}</option>
      </select>
      <svg viewBox="0 0 8 5" className="absolute right-1 h-[5px] w-2">
        <path d="M1 1 4 4 7 1" className="fill-none stroke-[#8d9096]" />
      </svg>
    </div>
  );
}

function Toolbars() {
  return (
    <div className="flex flex-col overflow-hidden bg-[#2d3034]">
      <div className="flex h-[23px] items-center gap-[5px]">
        <Grip />
        <ToolGroup width="w-[76px]" tools="new open save saveAs" />
        <ToolGroup width="w-[57px]" tools="preview printFast printSend" />
        <ToolGroup width="w-[38px]" tools="undo redo" />
        <div className="flex h-[18px] w-[193px] shrink-0 items-center gap-[2px] bg-[#3b3e43]">
          <ToolGroup width="w-[74px]" tools="bulb sun unlock printer" />
          <span className="h-[17px] w-4 shrink-0 bg-[#e4e4e6]" />
          <Dropdown label="Layer" value="0" width="w-[99px]" />
        </div>
        <ToolGroup width="w-[114px]" tools="brush dropper pickBox pickLayer pickOff pickOn" />
        <ToolGroup width="w-[76px]" tools="*cube cubeSide circleBox cubeShade" />
        <ToolGroup width="w-[96px]" tools="panel attach gear list resize" />
        <Dropdown label="Arbeitsbereich" value="Mechanical" width="w-[74px]" />
        <Dropdown label="Benutzeroberfläche" value="Mechanical" width="w-[122px]" />
        <Tool name="help" />
        <Grip />
        <ToolGroup width="w-[36px]" tools="dots3 snapEnd" />
        <ToolGroup
          width="w-[216px]"
          tools="*snapLine *snapMid snapNear *snapCenter snapBox snapPerp snapPar snapTan snapQuad circleBoxGray snapDot"
        />
        <ToolGroup width="w-[57px]" tools="*snapCross snapApp *snapExt" />
        <ToolGroup width="w-[100px]" tools="snapNone zTop hatchRed zNeg dimTop" />
      </div>
      <div className="flex h-[23px] items-center gap-[5px]">
        <Grip />
        <ToolGroup width="w-[37px]" tools="*cube cubeSide" />
        <ToolGroup width="w-[37px]" tools="circleBox cubeShade" />
        <Grip />
        <ToolGroup width="w-[18px]" tools="copyBack" />
        <ToolGroup width="w-[77px]" tools="copyBlue copyFar copyNear copyTwo" />
        <ToolGroup width="w-[42px]" tools="hatchBox spell" />
        <Grip />
        <ToolGroup width="w-[73px]" tools="block cube pyramid wedge" />
        <ToolGroup width="w-[57px]" tools="cylinder cone sphere" />
        <ToolGroup width="w-[18px]" tools="torus" />
        <ToolGroup width="w-[78px]" tools="spiral cubeUp pipe loft" />
        <ToolGroup width="w-[58px]" tools="slice level merge" />
        <Grip />
        <ToolGroup width="w-[55px]" tools="ringsBlue rings ringsGray" />
        <ToolGroup width="w-[114px]" tools="cubeArrow cubeNodes cubeMix cubeX cubeBall cubeTilt" />
        <ToolGroup width="w-[38px]" tools="cubeSide cubeTilt" />
        <ToolGroup width="w-[38px]" tools="cubeColor cubeColor" />
        <ToolGroup width="w-[98px]" tools="cubeGold cubeCheck cubesTwo cubeFace cubeBlue" />
      </div>
    </div>
  );
}

const TABS = [
  'Skizze', 'Volumenkörper', 'Oberfläche', 'Blechkonstruktion', 'Baugruppe',
  'Beschriften', 'Ansicht', 'Einstellungen', 'Werkzeuge',
];

function RibbonTabs() {
  return (
    <nav className="flex h-[23px] bg-[#18191c] text-[14px] leading-[22px] text-[#f2f2f2]">
      <div className="flex w-8 shrink-0 justify-end bg-[#2d3034]">
        <button type="button" aria-label="BricsCAD">
          <Logo cls="h-[23px] w-[23px]" />
        </button>
      </div>
      <button type="button" className="w-[77px] bg-[#2d3034]">Start</button>
      {TABS.map((t) => (
        <button key={t} type="button" className="min-w-[78px] px-[3px]">{t}</button>
      ))}
    </nav>
  );
}

const Caret = () => <span className="border-x-3 border-t-4 border-x-transparent border-t-white" />;

interface BigProps {
  width: string;
  lines: string[];
  caret?: boolean;
  children: ReactNode;
}

function Big({ width, lines, caret, children }: BigProps) {
  return (
    <button type="button" className={`flex shrink-0 flex-col items-center text-[11px] leading-[14px] whitespace-nowrap text-[#dcdde0] ${width}`}>
      <svg viewBox="0 0 32 32" className="mt-[2px] mb-px size-8" aria-hidden="true">{children}</svg>
      {lines.map((l, i) => (
        <span key={l} className="flex items-center gap-[3px]">
          {l}
          {caret && lines.length > 1 && i === lines.length - 1 && <Caret />}
        </span>
      ))}
      {caret && lines.length === 1 && <span className="flex h-[14px] items-center"><Caret /></span>}
    </button>
  );
}

// Column of up to three small tools, optionally each with a menu caret
function Col({ tools, carets = [] }: { tools: string; carets?: number[] }) {
  return (
    <div className={`flex shrink-0 flex-col ${carets.length ? 'w-[30px]' : 'w-5'}`}>
      {tools.split(' ').map((t, i) => (
        <button key={i} type="button" aria-label={t} className="flex h-[19px] items-center gap-px pl-[2px]">
          {icon(t)}
          {carets.includes(i) && <Caret />}
        </button>
      ))}
    </div>
  );
}

function Panel({ title, cls, children }: { title: string; cls: string; children: ReactNode }) {
  return (
    <section className={`flex shrink-0 flex-col ${cls}`}>
      <div className="flex h-[67px]">{children}</div>
      <h2 className="flex justify-center text-[11px] leading-4 font-semibold whitespace-nowrap text-white">{title}</h2>
    </section>
  );
}

function Ribbon() {
  return (
    <div className="flex overflow-x-clip bg-[#2d3034] pt-[2px]">
      <span className="mt-[22px] h-4 w-[3px] shrink-0 border-r border-dotted border-[#8d9096]" />
      <span className="w-[9px] shrink-0" />
      <Panel title="Skizze" cls="w-[202px]">
        <Big width="w-[78px]" lines={['BKS auf Fläche', 'ausrichten']} caret>
          <path d="M5 4V28H27" className="fill-none stroke-[#d4d6d9] stroke-2" />
          <path d="M5 0 9 6H1ZM31 28 25 24V32Z" className="fill-[#d4d6d9]" />
          <path d="M14 5H25V18H14Z" className="fill-[#4a90e8]" />
          <path d="M14 5 19 1H31L25 5ZM31 1V14L25 18V5Z" className="fill-[#8b9099]" />
        </Big>
        <Big width="w-[42px]" lines={['Polylinie']}>
          <path d="M4 28V14C4 -1 28 -1 28 14" className="fill-none stroke-[#d4d6d9] stroke-[1.5]" />
          <path d="M2 26H6V31H2ZM2 12H6V16H2ZM26 12H30V16H26Z" className="fill-[#2d3034] stroke-[#4a90e8] stroke-[1.5]" />
        </Big>
        <Col tools="point line rect" />
        <Col tools="circle arcLoop leaf" />
        <Col tools="pentagon spring spline" />
        <Col tools="hook circleBox sheets" />
      </Panel>
      <Panel title="Modell" cls="w-[152px]">
        <Big width="ml-1 w-[62px]" lines={['Extrudieren']}>
          <path d="M16 1 30 8V24M16 1 2 8V24M2 8 16 14 30 8" className="fill-none stroke-[#d4d6d9] stroke-[1.5]" />
          <path d="M2 24 16 31 30 24 16 17ZM16 8V24" className="fill-none stroke-[#4a90e8] stroke-[1.5]" />
          <path d="M16 5 19 11H13Z" className="fill-[#4a90e8]" />
        </Big>
        <Col tools="spiral pipe loft" />
        <Col tools="cube cylinder sphere" />
        <Col tools="cone torus pyramid" />
        <Col tools="wedge block shell" />
      </Panel>
      <Panel title="Volumenkörper Bearbeitung" cls="w-[196px]">
        <Big width="w-[83px]" lines={['Drücken/Ziehen']}>
          <path d="M16 4V18M16 23V28" className="fill-none stroke-[#e8e8ea] stroke-[1.5]" />
          <path d="M16 0 19 6H13ZM16 32 19 26H13Z" className="fill-[#e8e8ea]" />
          <path d="M1 22 7 10H31L25 22Z" className="fill-none stroke-[#3f7fd6] stroke-[1.5]" />
        </Big>
        <Col tools="ringsBlue rings ringsGray" />
        <Col tools="edgeRound edgeCut cubeMix" carets={[0, 1, 2]} />
        <Col tools="tiltBox cubeUp cubeBlue" />
        <Col tools="slice cubesTwo cubeFace" />
        <Col tools="prismBlue archBox cubeOk" />
      </Panel>
      <Panel title="Ändern" cls="w-[136px]">
        <Big width="ml-1 w-[67px]" lines={['Manipulieren']}>
          <path d="M5 27V5M5 27H28M5 8C18 8 26 16 26 27" className="fill-none stroke-[#e8b93c] stroke-[1.5]" />
          <path d="M5 0 10 7H0ZM32 27 25 22V32ZM9 27a4 4 0 1 1-8 0a4 4 0 1 1 8 0" className="fill-[#4a90e8]" />
        </Big>
        <Col tools="move4 rotate3 ball" />
        <Col tools="copyTo scale mirrorFlip" />
        <Col tools="arrayFull arrayRing arrayPath" />
      </Panel>
      <Panel title="Parametrieren" cls="w-[208px]">
        <Big width="w-[96px]" lines={['Auto', 'Parametrisierung']}>
          <path d="M3 7V4C3 -1 10 -1 10 4V7" className="fill-none stroke-white stroke-[1.5]" />
          <path d="M0 6H13V15H0Z" className="fill-[#c9a54a]" />
          <path d="M16 3 20 0V2H27V0L31 3 27 6V5H20V6ZM5 19H8L10 22H7V28H10L6 32 3 28H5V22H3Z" className="fill-[#e0262e]" />
          <text x="13" y="27" className="fill-white font-['Liberation_Serif'] text-[26px] italic">fx</text>
        </Big>
        <Col tools="pBox pCirc pBox" />
        <Col tools="pNode pArc pCone" />
        <Col tools="pTorus pBlock pPipe" />
        <Col tools="pEl pPlate lockBig" />
        <Col tools="formula tableIn pillars" carets={[0, 1, 2]} />
      </Panel>
      <Panel title="Baugruppe" cls="w-[194px]">
        <Big width="w-[50px]" lines={['Einfügen']} caret>
          <path d="M1 9 15 3 30 9 16 16ZM1 9V24L16 31V16M30 9V18M11 7C11 10 20 10 20 7V3C20 0 11 0 11 3Z" className="fill-[#2d3034] stroke-[#b9bcc0] stroke-[1.5]" />
          <path d="M17 30C17 22 22 20 24 20V16L32 23 24 28V25C21 25 19 27 17 30Z" className="fill-[#15a824]" />
        </Big>
        <Col tools="cubePlus folderPin gizmo" carets={[1]} />
        <Col tools="doc cubeGold cycle" />
        <Col tools="flagGreen linkH burst" />
        <Col tools="factory ballBox asmOk" />
        <Big width="w-[46px]" lines={['Ursprung']} caret>
          <path d="M3 0H9V8H3ZM24 0H30V8H24ZM24 22H30V29H24Z" className="fill-[#4a90e8]" />
          <path d="M6 8V12M24 8 18 13M20 26H24" className="fill-none stroke-[#4a90e8]" />
          <path d="M1 19 8 15 15 19V27L8 31 1 27ZM1 19 8 22 15 19M8 22V31" className="fill-none stroke-white stroke-[1.5]" />
          <path d="M12 14a4 4 0 1 1-8 0a4 4 0 1 1 8 0" className="fill-[#d4d6d9]" />
        </Big>
      </Panel>
      <Panel title="Wählen" cls="w-[84px]">
        <span className="w-[2px]" />
        <Col tools="selPlate selPlate2 selFan" />
        <Col tools="selPills selText selFan2" carets={[0, 2]} />
        <Col tools="selGem selCube selDiamond" carets={[0]} />
      </Panel>
      <Panel title="Querschnitt" cls="w-[72px]">
        <Big width="ml-1 w-[41px]" lines={['Schnitt', 'Ebene']}>
          <path d="M9 14 25 2V18L9 30Z" className="fill-[#27569c] stroke-[#4a90e8]" />
          <path d="M1 16 9 9H31L23 16ZM1 16V23H23V16M31 9V16L23 23M12 9V23" className="fill-none stroke-white stroke-[1.5]" />
        </Big>
        <Col tools="planeCut planeSwap" />
      </Panel>
      <Panel title="Zeichnungs Ansichten" cls="w-[120px]">
        <Big width="ml-1 w-[61px]" lines={['Generieren']}>
          <path d="M10 8 14 3H29L25 8ZM10 8V21H25V8M29 3V16L25 21" className="fill-none stroke-[#d4d6d9] stroke-[1.5]" />
          <path d="M1 8 6 3V17L1 22ZM10 30 14 25H29L25 30ZM14 25V28" className="fill-none stroke-[#4a7fd0] stroke-[1.5]" />
        </Big>
        <Col tools="viewGrid viewPart viewZoom" carets={[1, 2]} />
        <Col tools="viewBreak viewDocSync viewDocOut" />
      </Panel>
      <Panel title="Beschriften" cls="w-[304px]">
        <Big width="w-[56px]" lines={['Stückliste']}>
          <path d="M16 5 22 1 31 5V16H18V9Z" className="fill-[#3572c0]" />
          <path d="M1 13 14 6 24 11M1 13V26L12 31V17L1 13M12 17 22 12M8 11C8 14 15 14 15 11V8C15 6 8 6 8 8Z" className="fill-none stroke-[#d4d6d9] stroke-[1.5]" />
          <path d="M16 17H31V31H16Z" className="fill-white" />
          <path d="M16 17H31V20H16ZM19 23H28V24H19ZM19 26H28V27H19Z" className="fill-[#3f7fd6]" />
        </Big>
        <Big width="w-[96px]" lines={['Auto', 'Positionsnummer']} caret>
          <path d="M30 10a9 9 0 1 1-18 0a9 9 0 1 1 18 0M15 17 4 28M19 8 22 6V15" className="fill-none stroke-white stroke-[1.5]" />
          <path d="M0 32V23L9 32Z" className="fill-white" />
          <path d="M26 17 19 25H24L21 32 31 23H26Z" className="fill-[#f4c43c]" />
        </Big>
        <Big width="w-[59px]" lines={['Bemassung']}>
          <path d="M1 11V21M31 11V21M4 16H28" className="fill-none stroke-[#4a90e8] stroke-2" />
          <path d="M2 16 8 12V20ZM30 16 24 12V20Z" className="fill-[#4a90e8]" />
        </Big>
        <Col tools="dimDia dimRad dimArc" />
        <Col tools="dimLin dimDiag dimCurve" />
        <Col tools="dimCen dimAng textArrow" />
        <div className="flex w-[30px] flex-col">
          <button type="button" aria-label="Text" className="flex h-[19px] items-center gap-px pl-[2px]">
            <span className="w-4 text-center text-[20px] leading-[19px] text-white">A</span>
            <Caret />
          </button>
          <Col tools="textStyle table" carets={[0]} />
        </div>
      </Panel>
      <Panel title="Navigieren" cls="w-[66px]">
        <span className="w-[18px]" />
        <Col tools="orbit pan zoom" carets={[2]} />
      </Panel>
    </div>
  );
}

const GripTop = () => <span className="h-[2px] w-[14px] border-t-2 border-dotted border-[#d0d3d6]" />;

// Tall dark strip with the panel toggles
function SideDock({ items }: { items: { label: string; d: string }[] }) {
  return (
    <aside className="flex w-12 shrink-0 flex-col items-center bg-[#18191b]">
      <div className="flex h-[11px] w-full justify-center bg-[#2d3034] pt-[2px]"><GripTop /></div>
      <div className="flex flex-col gap-[22px] pt-[10px]">
        {items.map(({ label, d }) => (
          <button key={label} type="button" aria-label={label}>
            <svg viewBox="0 0 28 28" className="size-7">
              <path d={d} className="fill-none stroke-white stroke-[1.3]" />
            </svg>
          </button>
        ))}
      </div>
    </aside>
  );
}

const LEFT_DOCK = [
  { label: 'Bauteile', d: 'M14 4 24 9V20L14 26 4 20V9ZM4 9 14 14 24 9M14 14V26M10 7C10 10 18 10 18 7V5C18 1 10 1 10 5Z' },
  { label: 'Struktur', d: 'M3 3H14V9H3ZM6 6H11M8 9V23H13M8 16H13M13 13H25V18H13ZM13 21H25V26H13Z' },
  { label: 'Tipps', d: 'M12 22C3 15 2 2 14 2C26 2 25 15 16 22ZM12 22C7 14 8 2 14 2M16 22C21 14 20 2 14 2M12 24H16V27H12Z' },
  { label: 'Tabellen', d: 'M3 3H25V26H3ZM3 9H25M3 14H25M3 20H25M10 9V26M17 9V26' },
];

const RIGHT_DOCK = [
  { label: 'Eigenschaften', d: 'M2 6H6M11 6H26M11 6a2.500 2.500 0 1 1-5 0a2.500 2.500 0 1 1 5 0M2 14H18M23 14H26M23 14a2.500 2.500 0 1 1-5 0a2.500 2.500 0 1 1 5 0M2 22H11M16 22H26M16 22a2.500 2.500 0 1 1-5 0a2.500 2.500 0 1 1 5 0' },
  { label: 'Anhänge', d: 'M8 20V8C8 0 20 0 20 8V20C20 28 11 28 11 20V10C11 6 17 6 17 10V19' },
  { label: 'Layer', d: 'M14 2 26 9 14 16 2 9ZM2 13 14 20 26 13M2 18 14 25 26 18M2 9V10M2 13V14' },
];

const LEFT_TOOLS = [
  'lineBlue arch rect',
  'arcLoop circle leaf ellipseArc squiggle point',
  'circleBoxFill circleBoxFill bulge wipe hand zigzag',
  'cloud table',
];

const RIGHT_TOOLS = [
  'move copyTo hook brush dropper scale',
  'copyBolt moveBolt',
  'spin spinAxis',
  'mirror mirrorFlip',
  'array',
  'align',
  'stretch trim breakAt join extend taper',
  'chamfer fillet',
  'steps steps',
  'hatchEdit plineEdit splineEdit',
  'cubeWire ball',
];

function ToolStrip({ groups, children }: { groups: string[]; children?: ReactNode }) {
  return (
    <aside className="flex w-6 shrink-0 flex-col items-center gap-[5px] bg-[#2d3034] pt-[5px]">
      <GripTop />
      {groups.map((g, i) => (
        <div key={i} className="flex flex-col gap-px">
          {g.split(' ').map((t, j) => <Tool key={j} name={t} />)}
        </div>
      ))}
      {children}
    </aside>
  );
}

function FileTabs() {
  return (
    <div className="flex h-[18px] items-end border-b border-[#8f9193] bg-[#2d3034] font-['Liberation_Sans'] text-[11px] leading-[15px] text-white">
      <div className="flex w-[63px] items-center justify-between bg-[#18191c] pr-[6px] pl-[10px]">
        <button type="button">Start</button>
        <button type="button" aria-label="Start schließen">✕</button>
      </div>
      <div className="flex w-[106px] items-center justify-between pr-[6px] pl-[10px]">
        <button type="button" className="font-bold">Zeichnung1*</button>
        <button type="button" aria-label="Zeichnung1 schließen">✕</button>
      </div>
      <button type="button" aria-label="Neue Zeichnung" className="w-[23px] bg-[#18191c] text-[16px] leading-[15px] text-[#c4c6c9]">+</button>
    </div>
  );
}

function Palette() {
  return (
    <div className="absolute top-[11px] left-4 w-[458px] border-t border-[#4d4f52] bg-white shadow-md">
      <div className="flex h-[28px] items-center justify-between pl-[7px]">
        <h2 className="text-[12px] leading-4 text-[#222]">Direkt Modellierung</h2>
        <button type="button" aria-label="Palette schließen" className="mt-1 flex h-5 w-5 items-center justify-center bg-[#c74850] text-[11px] font-bold text-white">×</button>
      </div>
      <div className="flex h-[22px] items-center gap-[5px] bg-[#26282b] pl-[6px]">
        <ToolGroup width="w-[57px]" tools="push move4 rotate3" />
        <ToolGroup width="w-[57px]" tools="archBox prismBlue cubeOk" />
        <ToolGroup width="w-[116px]" tools="ucs cubeMix spiral cube cubeBlue shell" />
        <ToolGroup width="w-[57px]" tools="edgeRound edgeCut cross" />
        <ToolGroup width="w-[57px]" tools="wave domeBlue cubeMix" />
        <ToolGroup width="w-[78px]" tools="syncGreen tree tableFx gear" />
      </div>
    </div>
  );
}

function Solid() {
  return (
    <svg viewBox="0 0 260 494" className="absolute top-[143px] left-[673px] h-[494px] w-[260px]">
      <defs>
        <linearGradient id="front" gradientUnits="userSpaceOnUse" x1="12" y1="240" x2="262" y2="285">
          <stop offset="0.06" stopColor="#fdfdfd" />
          <stop offset="0.25" stopColor="#e6e6e6" />
          <stop offset="0.5" stopColor="#bababa" />
          <stop offset="0.75" stopColor="#969696" />
          <stop offset="1" stopColor="#747474" />
        </linearGradient>
        <radialGradient id="topShade" gradientUnits="userSpaceOnUse" cx="0" cy="0" r="1" gradientTransform="translate(150 85) rotate(30) scale(190 150)">
          <stop offset="0" stopColor="#000" stopOpacity="0.36" />
          <stop offset="0.25" stopColor="#000" stopOpacity="0.28" />
          <stop offset="0.5" stopColor="#000" stopOpacity="0.15" />
          <stop offset="0.75" stopColor="#000" stopOpacity="0.05" />
          <stop offset="1" stopColor="#000" stopOpacity="0" />
        </radialGradient>
        <radialGradient id="lowShade" gradientUnits="userSpaceOnUse" cx="250" cy="400" r="220">
          <stop offset="0" stopColor="#000" stopOpacity="0.16" />
          <stop offset="1" stopColor="#000" stopOpacity="0" />
        </radialGradient>
        <linearGradient id="bottomShade" gradientUnits="userSpaceOnUse" x1="60" y1="260" x2="100" y2="490">
          <stop offset="0" stopColor="#000" stopOpacity="0" />
          <stop offset="1" stopColor="#000" stopOpacity="0.2" />
        </linearGradient>
        <linearGradient id="side" gradientUnits="userSpaceOnUse" x1="28" y1="250" x2="20" y2="490">
          <stop offset="0" stopColor="#6e6e6e" />
          <stop offset="0.35" stopColor="#9c9c9c" />
          <stop offset="0.7" stopColor="#cacaca" />
          <stop offset="1" stopColor="#e4e4e4" />
        </linearGradient>
        <linearGradient id="dark" x1="0" y1="0" x2="1" y2="0.4">
          <stop offset="0.2" stopColor="#555" />
          <stop offset="0.7" stopColor="#2b2b2b" />
          <stop offset="1" stopColor="#1a1a1a" />
        </linearGradient>
      </defs>
      <path d="M199 149 258 116C250 150 234 190 230 230V258C220 220 208 180 199 149Z" fill="url(#dark)" stroke="#222" strokeWidth="0.6" />
      <path d="M28 236 1 460 60 494Z" fill="url(#side)" stroke="#666" strokeWidth="0.8" />
      {['front', 'topShade', 'lowShade', 'bottomShade'].map((id) => (
        <path key={id} d="M1 36 199 149C215 198 228 250 258 379L60 493C50 410 38 330 28 238Z" fill={`url(#${id})`} />
      ))}
      <path d="M1 36 199 149C215 198 228 250 258 379L60 493C50 410 38 330 28 238Z" fill="none" stroke="#555" strokeWidth="0.8" />
      <path d="M1 36 60 1 258 116 199 149Z" fill="#cbcbcb" stroke="#666" strokeWidth="0.8" />
    </svg>
  );
}

function Axes() {
  return (
    <svg viewBox="0 0 80 130" className="absolute top-[500px] left-[533px] h-[130px] w-20">
      <path d="M11 82V32" className="stroke-[#1550b8] stroke-3" />
      <path d="M11 21 16 33H6Z" className="fill-[#1558cc]" />
      <path d="M11 82 56 56" className="stroke-[#0e8040] stroke-3" />
      <path d="M65 51 58 61 53 53Z" className="fill-[#0e8040]" />
      <path d="M11 82 56 108" className="stroke-[#d05a62] stroke-3" />
      <path d="M65 113 53 111 57 102Z" className="fill-[#d05a62]" />
      <text x="5" y="20" className="fill-[#6aa6dc] font-['Lato'] text-[18px] font-light">Z</text>
      <text x="65" y="54" className="fill-[#b8ddc8] font-['Lato'] text-[18px] font-light">Y</text>
      <text x="65" y="124" className="fill-[#e4d6d8] font-['Lato'] text-[18px] font-light">X</text>
    </svg>
  );
}

const COMPASS_DOTS = [[39, 8], [60, 17], [69, 39], [60, 61], [39, 70], [16, 61], [7, 39], [16, 17]];

function Canvas() {
  return (
    <div className="relative flex flex-1 flex-col justify-end overflow-hidden bg-white">
      <Palette />
      <Solid />
      <Axes />
      <svg viewBox="0 0 50 56" className="absolute top-[560px] left-[998px] h-14 w-[50px]">
        <path d="M17 3V52" className="stroke-[#4d86c8]" />
        <path d="M3 44 46 20" className="stroke-[#8cc8c0]" />
        <path d="M3 27 46 51" className="stroke-[#e6b8b4]" />
        <path d="M13 31H21V39H13Z" className="fill-none stroke-[#333]" />
      </svg>
      <svg viewBox="0 0 78 78" className="absolute top-[11px] right-[11px] size-[78px]">
        <circle cx="39" cy="39" r="38" className="fill-[#fafafa] stroke-[#d2d2d2]" />
        {COMPASS_DOTS.map(([x, y]) => (
          <circle key={`${x}-${y}`} cx={x} cy={y} r="2" className="fill-[#a0a0a0]" />
        ))}
      </svg>
      <label className="mb-[5px] flex h-[18px] w-[1087px] max-w-full items-center bg-[#757575] pl-1 font-['DejaVu_Sans_Mono'] text-[12px] text-[#e8e8e8]">
        <span className="h-[14px] w-[2px] border-l-2 border-dotted border-white" />
        <span className="w-5 text-center">:</span>
        <input aria-label="Befehl" placeholder="Befehl eingeben" className="flex-1 bg-transparent italic outline-none placeholder:text-[#d2d2d2]" />
        <span className="mr-[7px] h-[5px] w-3 bg-white" />
      </label>
    </div>
  );
}

function LayoutTabs() {
  return (
    <div className="flex h-[17px] items-stretch border-t border-[#8c9490] bg-[#2d3034] text-[11px] leading-[14px] text-white">
      <div className="flex bg-[#18191c] pr-1">
        {['M4 3V13M12 3 6 8 12 13Z', 'M11 3 5 8 11 13Z', 'M5 3 11 8 5 13Z', 'M12 3V13M4 3 10 8 4 13Z'].map((d, i) => (
          <button key={d} type="button" aria-label={['Erstes', 'Vorheriges', 'Nächstes', 'Letztes'][i]} className="flex w-[17px] items-center justify-center border-r border-[#85888c]">
            <svg viewBox="0 0 16 16" className="size-[14px]">
              <path d={d} className="fill-white stroke-white" />
            </svg>
          </button>
        ))}
        <button type="button" aria-label="Layoutliste" className="flex w-[17px] items-center justify-center">
          <svg viewBox="0 0 14 14" className="size-[14px]">
            <path d="M1 1H13V13H1ZM1 5H13M1 9H13" className="fill-none stroke-[#b9bcc0]" />
          </svg>
        </button>
        <button type="button" className="w-[36px] bg-[#2d3034] font-bold">Model</button>
        <button type="button" className="w-[45px]">Layout1</button>
        <button type="button" className="w-[45px]">Layout2</button>
        <button type="button" aria-label="Neues Layout" className="w-[14px]">+</button>
      </div>
    </div>
  );
}

// [label, width, state] - state 'on' is pressed, 'off' is greyed out
const STATUS: [string, string, string?][] = [
  ['249.02, 226.2, 0', 'w-[80px]'],
  ['0', 'w-[10px]'],
  ['VonLayer', 'w-[49px]'],
  ['VonLayer', 'w-[48px]'],
  ['Standard', 'w-[47px]'],
  ['ISO-25', 'w-[37px]'],
  ['Mechanical', 'w-[56px]'],
  ['FANG', 'w-[33px]', 'off'],
  ['RASTER', 'w-[46px]', 'off'],
  ['ORTHO', 'w-[38px]', 'off'],
  ['POLAR', 'w-[37px]', 'on'],
  ['OFANG', 'w-[38px]', 'on'],
  ['OTRACK', 'w-[43px]', 'on'],
  ['LST', 'w-[21px]', 'off'],
  ['MODELL', 'w-[43px]'],
  ['1:4', 'w-[18px]'],
  ['DBKS', 'w-[30px]', 'on'],
  ['DYN', 'w-[24px]', 'on'],
  ['QUAD', 'w-[32px]', 'on'],
  ['RT', 'w-[16px]', 'on'],
  ['HKA', 'w-[25px]', 'off'],
  ['UISPERREN', 'w-[59px]', 'off'],
  ['Keine', 'w-[30px]'],
];

function StatusBar() {
  return (
    <footer className="flex h-[17px] shrink-0 items-stretch overflow-hidden border-b-2 border-[#4a9880] bg-[#17191b] pl-[2px] text-[10px] leading-[15px] text-[#f2f2f4]">
      <span className="text-[11px]">Bereit</span>
      <div className="ml-auto flex">
        {STATUS.map(([label, width, state], i) => (
          <button
            key={i}
            type="button"
            className={`flex justify-center border-r border-[#85888c] whitespace-nowrap ${width} ${
              state === 'off' ? 'text-[#63666b]' : ''
            } ${state === 'on' ? 'bg-[#3a3c40]' : ''}`}
          >
            {label}
          </button>
        ))}
        <span className="w-[18px] pl-[2px] text-[8px]">▾</span>
        <svg viewBox="0 0 10 15" className="h-[15px] w-[10px]" aria-hidden="true">
          <path d="M7 5H9V7H7ZM4 8H6V10H4ZM7 8H9V10H7ZM1 11H3V13H1ZM4 11H6V13H4ZM7 11H9V13H7Z" className="fill-[#b9bcc0]" />
        </svg>
      </div>
    </footer>
  );
}

export default function App() {
  return (
    <div className="flex min-h-screen flex-col bg-white font-['Open_Sans','Noto_Sans',sans-serif]">
      <TitleBar />
      <Toolbars />
      <RibbonTabs />
      <Ribbon />
      <main className="flex flex-1 bg-[#2d3034]">
        <SideDock items={LEFT_DOCK} />
        <ToolStrip groups={LEFT_TOOLS}>
          <div className="flex flex-col items-center text-white">
            <button type="button" aria-label="Text" className="-mt-1 text-[16px] leading-[22px]">A</button>
            <button type="button" aria-label="Textstil" className="h-[18px] border-b-4 border-[#a9adb3] text-[12px] leading-[14px]">A.</button>
          </div>
        </ToolStrip>
        <div className="flex min-w-0 flex-1 flex-col">
          <FileTabs />
          <Canvas />
          <LayoutTabs />
        </div>
        <SideDock items={RIGHT_DOCK} />
        <ToolStrip groups={RIGHT_TOOLS} />
      </main>
      <StatusBar />
      <div className="h-[39px] shrink-0" />
    </div>
  );
}
